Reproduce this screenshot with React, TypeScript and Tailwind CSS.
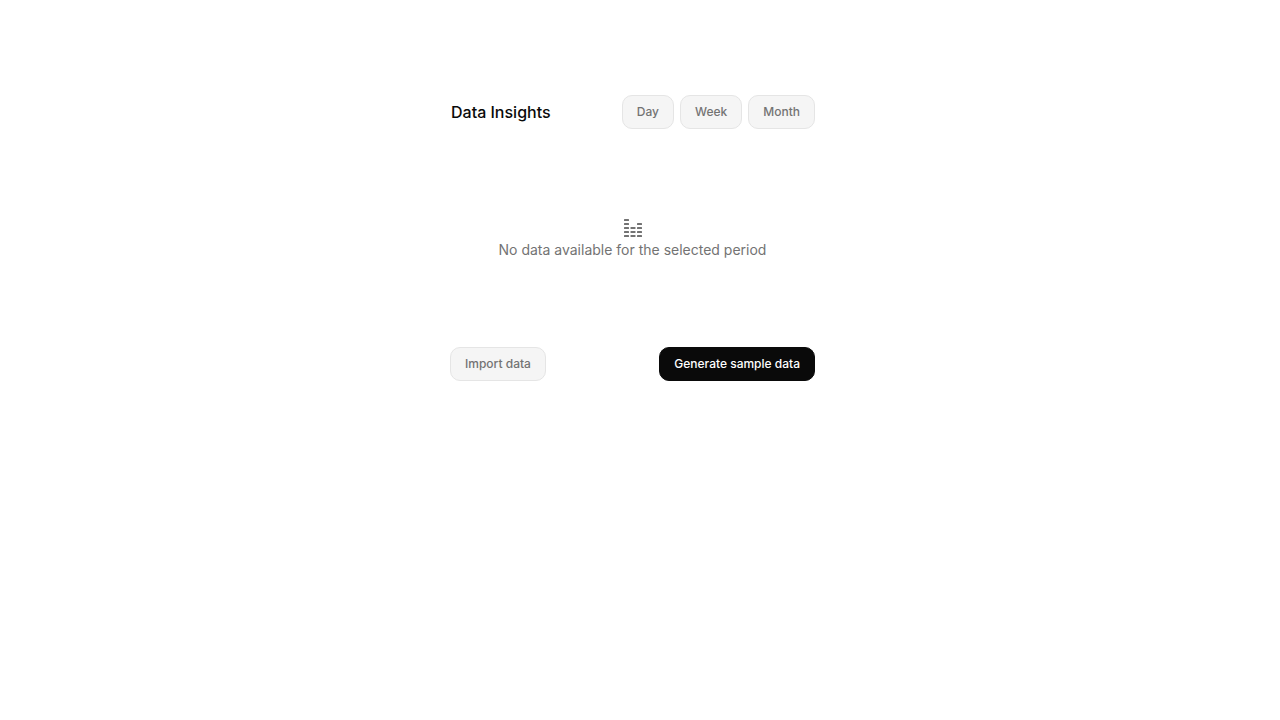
const periods = ["Day", "Week", "Month"]

export default function App() {
  return (
    <main
      className="flex min-h-svh flex-col items-center bg-white pt-[95px] pr-[15px]
     font-['Inter',sans-serif] text-neutral-950 antialiased"
    >
      <section className="w-full max-w-[365px]">
        <header className="flex items-center justify-between">
          <h2 className="pl-px text-base font-medium">Data Insights</h2>
          <div className="flex gap-1.5">
            {periods.map((period) => (
              <Button key={period}>{period}</Button>
            ))}
          </div>
        </header>

        <EmptyState />

        <footer className="flex items-center justify-between">
          <Button>Import data</Button>
          <Button primary>Generate sample data</Button>
        </footer>
      </section>
    </main>
  )
}

function Button({
  children,
  primary,
}: {
  children: React.ReactNode
  primary?: boolean
}) {
  return (
    <button
      type="button"
      className={
        primary
          ? "rounded-[10px] border border-neutral-950 bg-neutral-950 px-3.5 py-2 text-xs font-medium text-white"
          : "rounded-[10px] border border-neutral-200 bg-neutral-100 px-3.5 py-2 text-xs font-medium text-neutral-500"
      }
    >
      {children}
    </button>
  )
}

function EmptyState() {
  return (
    <div className="flex h-[218px] flex-col items-center justify-center text-neutral-500">
      <BarsIcon />
      <p className="text-sm">No data available for the selected period</p>
    </div>
  )
}

// number of dashes stacked in each column
const columns = [5, 3, 4]

function BarsIcon() {
  return (
    <svg width="24" height="24" viewBox="0 0 24 24" aria-hidden="true">
      {columns.map((count, col) =>
        Array.from({ length: count }, (_, row) => (
          <rect
            key={`${col}-${row}`}
            x={3 + col * 6.5}
            y={19 - row * 4}
            width="5"
            height="2"
            rx="0.5"
            fill="currentColor"
          />
        ))
      )}
    </svg>
  )
}
